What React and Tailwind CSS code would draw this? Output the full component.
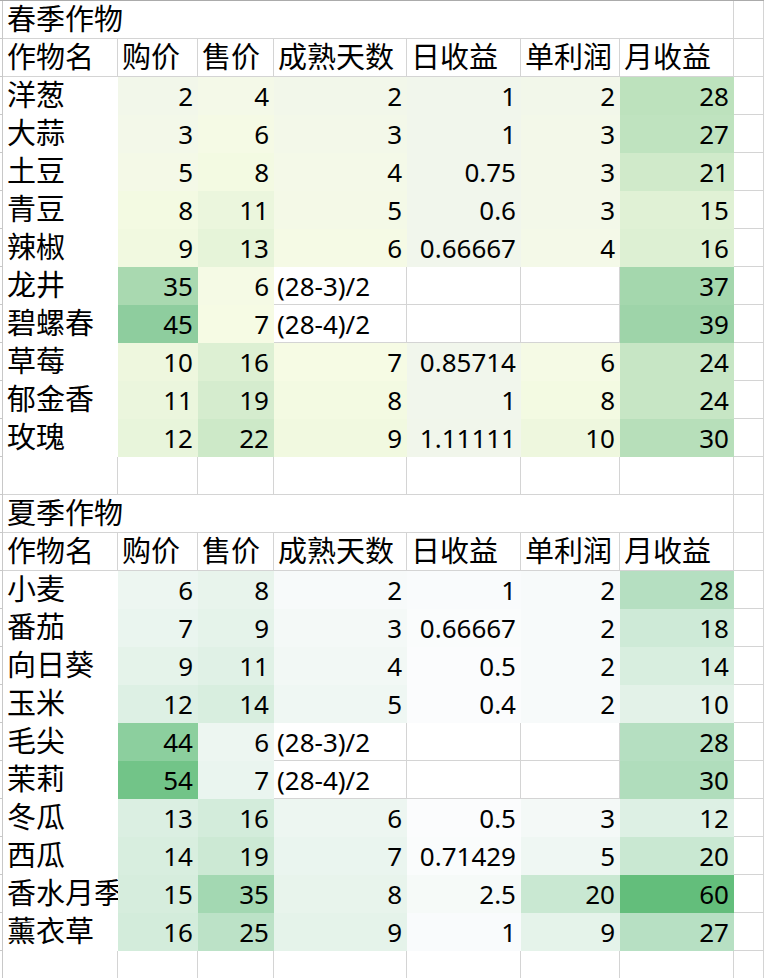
import React from 'react';

function toRgb(h) {
  const n = parseInt(h.slice(1), 16);
  return [(n >> 16) & 255, (n >> 8) & 255, n & 255];
}
function toHex(rgb) {
  return '#' + rgb.map((x) => Math.round(x).toString(16).padStart(2, '0')).join('');
}
function scale(stops, v) {
  if (v <= stops[0][0]) return stops[0][1];
  for (let i = 1; i < stops.length; i++) {
    const [v1, c1] = stops[i];
    if (v <= v1) {
      const [v0, c0] = stops[i - 1];
      const t = (v - v0) / (v1 - v0);
      const a = toRgb(c0);
      const b = toRgb(c1);
      return toHex(a.map((x, k) => x + (b[k] - x) * t));
    }
  }
  return stops[stops.length - 1][1];
}

const SPRING = [
  [0.6, '#f1f6ec'],
  [7, '#f6fbe4'],
  [45, '#8ecd9e'],
];
const SUMMER = [
  [0.4, '#fbfcfd'],
  [60, '#63be7b'],
];

const HEADERS = ['作物名', '购价', '售价', '成熟天数', '日收益', '单利润', '月收益'];

const springData = [
  ['洋葱', '2', '4', '2', '1', '2', '28'],
  ['大蒜', '3', '6', '3', '1', '3', '27'],
  ['土豆', '5', '8', '4', '0.75', '3', '21'],
  ['青豆', '8', '11', '5', '0.6', '3', '15'],
  ['辣椒', '9', '13', '6', '0.66667', '4', '16'],
  ['龙井', '35', '6', '(28-3)/2', '', '', '37'],
  ['碧螺春', '45', '7', '(28-4)/2', '', '', '39'],
  ['草莓', '10', '16', '7', '0.85714', '6', '24'],
  ['郁金香', '11', '19', '8', '1', '8', '24'],
  ['玫瑰', '12', '22', '9', '1.11111', '10', '30'],
];

const summerData = [
  ['小麦', '6', '8', '2', '1', '2', '28'],
  ['番茄', '7', '9', '3', '0.66667', '2', '18'],
  ['向日葵', '9', '11', '4', '0.5', '2', '14'],
  ['玉米', '12', '14', '5', '0.4', '2', '10'],
  ['毛尖', '44', '6', '(28-3)/2', '', '', '28'],
  ['茉莉', '54', '7', '(28-4)/2', '', '', '30'],
  ['冬瓜', '13', '16', '6', '0.5', '3', '12'],
  ['西瓜', '14', '19', '7', '0.71429', '5', '20'],
  ['香水月季', '15', '35', '8', '2.5', '20', '60'],
  ['薰衣草', '16', '25', '9', '1', '9', '27'],
];

const empty = () => ({ text: '', fill: null });

function titleRow(text) {
  return [{ text, fill: null, cjk: true, span: true }, empty()];
}
function headerRow() {
  return [...HEADERS.map((h) => ({ text: h, fill: null, cjk: true })), empty()];
}
function emptyRow() {
  return Array.from({ length: 8 }, empty);
}
function dataRow(d, stops) {
  const cells = [{ text: d[0], fill: '#ffffff', cjk: true }];
  for (let i = 1; i < 7; i++) {
    const s = d[i];
    if (s === '') cells.push(empty());
    else if (isNaN(Number(s))) cells.push({ text: s, fill: null, formula: true });
    else cells.push({ text: s, fill: scale(stops, Number(s)), num: true });
  }
  cells.push(empty());
  return cells;
}

function buildRows() {
  return [
    titleRow('春季作物'),
    headerRow(),
    ...springData.map((d) => dataRow(d, SPRING)),
    emptyRow(),
    titleRow('夏季作物'),
    headerRow(),
    ...summerData.map((d) => dataRow(d, SUMMER)),
    emptyRow(),
  ];
}

function Cell({ cell }) {
  let cls = 'h-[38px] border-r border-b whitespace-nowrap';
  if (cell.span) cls += ' col-span-7';
  if (!cell.fill) cls += ' border-[#d4d4d4]';
  if (cell.cjk) {
    cls += " font-['Noto_Sans','Noto_Sans_CJK_SC',sans-serif] text-[29px] leading-[35px] pb-[2px] pl-[4px] text-left";
  } else if (cell.num) {
    cls += " font-['Noto_Sans',sans-serif] text-[26px] leading-[35px] pt-[2px] pr-[4px] text-right";
  } else {
    cls += " font-['Noto_Sans',sans-serif] text-[26px] leading-[35px] pt-[2px] pl-[3px] text-left";
  }
  const style = cell.fill ? { backgroundColor: cell.fill, borderColor: cell.fill } : undefined;
  return (
    <div className={cls} style={style}>
      {cell.text}
    </div>
  );
}

export default function App() {
  const rows = buildRows();
  return (
    <div className="w-[764px] h-[978px] overflow-hidden bg-white text-black">
      <div className="grid grid-cols-[3px_115px_80px_76px_133px_114px_99px_114px_1fr] border-t border-[#ababab]">
        {rows.map((row, r) => (
          <React.Fragment key={r}>
            <div className="h-[38px] border-r border-b border-[#c8c8c8]" />
            {row.map((cell, c) => (
              <Cell key={c} cell={cell} />
            ))}
          </React.Fragment>
        ))}
      </div>
    </div>
  );
}
